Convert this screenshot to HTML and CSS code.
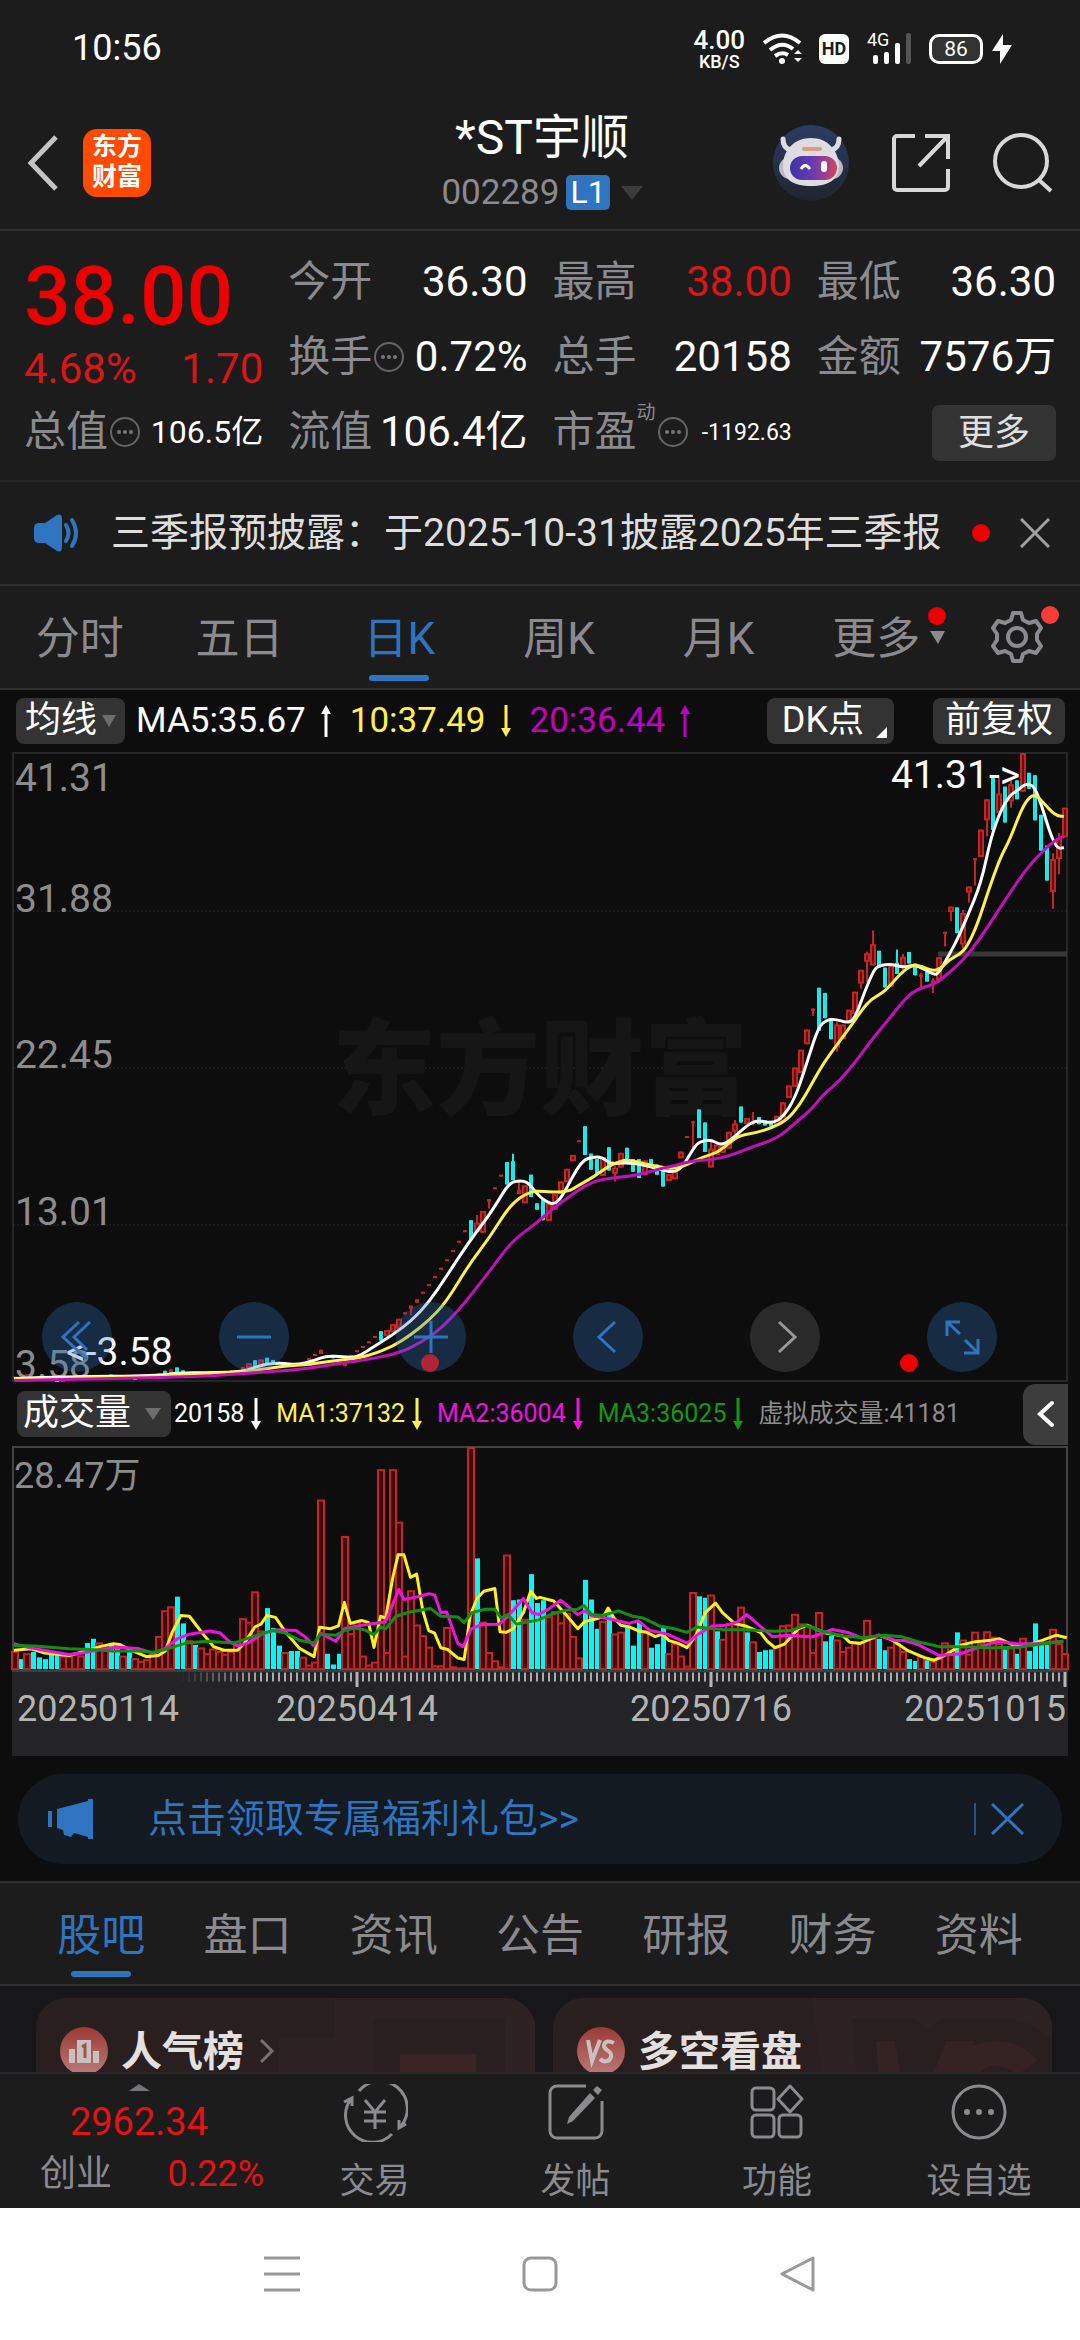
FILE: index.html
```html
<!DOCTYPE html>
<html lang="zh-CN">
<head>
<meta charset="utf-8">
<meta name="viewport" content="width=device-width, initial-scale=1">
<title>*ST宇顺 002289</title>
<link rel="stylesheet" href="styles.css">
</head>
<body>
<div class="status">
  <span class="clock">10:56</span>
  <span class="net-speed"><b>4.00</b><span>KB/S</span></span>
  <svg class="wifi" width="40" height="32" viewBox="0 0 40 32" fill="none" stroke="#fff" stroke-width="4">
    <path d="M1 10Q19-5 37 10M7 17Q19 7 30 16M12 23Q19 18 25 22"/>
    <circle cx="19" cy="28" r="3" fill="#fff" stroke="none"/>
    <path d="M31 21l4-4 4 4zM31 25l4 4 4-4z" fill="#fff" stroke="none"/>
  </svg>
  <span class="hd">HD</span>
  <span class="signal"><small>4G</small>
    <svg width="38" height="32" viewBox="0 0 38 32" fill="#fff"><rect y="22" width="5" height="9" rx="2"/><rect x="11" y="19" width="5" height="12" rx="2"/><rect x="22" y="10" width="5" height="21" rx="2"/><rect x="33" width="5" height="31" rx="2" fill="#555"/></svg>
  </span>
  <span class="battery">86</span>
  <svg class="bolt" width="20" height="30" viewBox="0 0 20 30" fill="#fff"><path d="M11 0L0 17h8v13L20 11h-9z"/></svg>
</div>

<header class="header">
  <button class="plain" aria-label="返回"><svg width="32" height="56" viewBox="0 0 32 56" fill="none" stroke="#c4c4c4" stroke-width="5"><path d="M29 2L4 28l25 26"/></svg></button>
  <a class="logo" href="#">东方<br>财富</a>
  <div class="title">
    <h1>*ST宇顺</h1>
    <p><span>002289</span><b>L1</b><svg width="22" height="14" viewBox="0 0 22 14"><path d="M0 0h22L11 14z" fill="#3c3c3c"/></svg></p>
  </div>
  <div class="header-tools">
    <button class="plain" aria-label="智能助手">
      <svg width="76" height="76" viewBox="0 0 76 76">
        <defs>
          <linearGradient id="sky" x1="0" y1="0" x2="0" y2="1"><stop stop-color="#2c3d63"/><stop offset="1" stop-color="#20242e"/></linearGradient>
          <linearGradient id="visor" x1="0" y1="0" x2="1" y2="0"><stop stop-color="#3a35a8"/><stop offset=".5" stop-color="#6c3bb0"/><stop offset="1" stop-color="#d4455f"/></linearGradient>
        </defs>
        <circle cx="38" cy="38" r="38" fill="url(#sky)"/>
        <path d="M10 14c0 7 3 10 8 11M66 14c0 7-3 10-8 11" stroke="#dedde2" stroke-width="5" stroke-linecap="round" fill="none"/>
        <rect x="6" y="32" width="64" height="22" rx="11" fill="#b9b8c4"/>
        <path d="M38 13c16 0 26 11 28 26 1 15-10 22-28 22S9 54 10 39c1-15 12-26 28-26z" fill="#dedce2"/>
        <rect x="29" y="22" width="20" height="4" rx="2" fill="#d9a080"/>
        <rect x="17" y="31" width="47" height="24" rx="12" fill="url(#visor)"/>
        <path d="M28 44q4-7 9 0" fill="none" stroke="#fff" stroke-width="3"/><rect x="48" y="36" width="6" height="11" rx="3" fill="#fff"/>
      </svg>
    </button>
    <button class="plain" aria-label="分享"><svg width="60" height="60" viewBox="0 0 60 60" fill="none" stroke="#d8d8d8" stroke-width="4"><path d="M24 3H6a3 3 0 0 0-3 3v48a3 3 0 0 0 3 3h48a3 3 0 0 0 3-3V36M34 3h23v23M57 3L28 33"/></svg></button>
    <button class="plain" aria-label="搜索"><svg width="60" height="60" viewBox="0 0 60 60" fill="none" stroke="#d8d8d8" stroke-width="4"><circle cx="28" cy="28" r="26"/><path d="M46 47l12 11"/></svg></button>
  </div>
</header>

<section class="quote">
  <div class="price"><strong>38.00</strong><p><span>4.68%</span><span>1.70</span></p></div>
  <dl><dt>今开</dt><dd>36.30</dd></dl>
  <dl><dt>最高</dt><dd class="up">38.00</dd></dl>
  <dl><dt>最低</dt><dd>36.30</dd></dl>
  <dl><dt>换手<svg class="more-dot" viewBox="0 0 30 30"><use href="#dots"/></svg></dt><dd>0.72%</dd></dl>
  <dl><dt>总手</dt><dd>20158</dd></dl>
  <dl><dt>金额</dt><dd>7576万</dd></dl>
  <dl><dt>总值<svg class="more-dot" viewBox="0 0 30 30"><use href="#dots"/></svg></dt><dd class="mid">106.5亿</dd></dl>
  <dl><dt>流值</dt><dd>106.4亿</dd></dl>
  <dl><dt>市盈<sup>动</sup><svg class="more-dot" viewBox="0 0 30 30"><use href="#dots"/></svg></dt><dd class="small">-1192.63</dd></dl>
  <button class="more">更多</button>
</section>
<svg width="0" height="0" class="defs"><symbol id="dots" viewBox="0 0 30 30"><circle cx="15" cy="15" r="14" fill="none" stroke="#66666a" stroke-width="2"/><g fill="#77777b"><circle cx="9" cy="15" r="2"/><circle cx="15" cy="15" r="2"/><circle cx="21" cy="15" r="2"/></g></symbol></svg>

<section class="notice">
  <svg width="46" height="38" viewBox="0 0 46 38"><path d="M0 14q0-5 5-5h6L23 1q5-2 5 4v28q0 6-5 4L11 29H5q-5 0-5-5z" fill="#2f74c0"/><path d="M32 11q5 8 0 16M38 6q8 13 0 26" fill="none" stroke="#2f74c0" stroke-width="4" stroke-linecap="round"/></svg>
  <a href="#">三季报预披露：于2025-10-31披露2025年三季报</a>
  <i class="dot"></i>
  <button class="plain" aria-label="关闭"><svg width="30" height="30" viewBox="0 0 30 30" stroke="#a0a0a0" stroke-width="3"><path d="M1 1l28 28M29 1L1 29"/></svg></button>
</section>

<nav class="periods">
  <button>分时</button><button>五日</button><button class="on">日K</button><button>周K</button><button>月K</button>
  <button>更多<span class="drop"><i class="dot"></i><svg width="15" height="13" viewBox="0 0 15 13"><path d="M0 0h15L8 13z" fill="#8a8a8f"/></svg></span></button>
  <button class="gear" aria-label="设置"><svg width="52" height="52" viewBox="0 0 52 52" fill="none" stroke="#8a8a8f" stroke-width="4" stroke-linejoin="round"><path d="M22 2h8l2 7 6 3 7-2 5 7-4 6v6l4 6-5 7-7-2-6 3-2 7h-8l-2-7-6-3-7 2-5-7 4-6v-6l-4-6 5-7 7 2 6-3z"/><circle cx="26" cy="26" r="9"/></svg><i class="dot"></i></button>
</nav>

<main class="chart">
  <div class="bar">
    <button class="chip">均线<svg width="14" height="12" viewBox="0 0 14 12"><path d="M0 0h14L7 12z" fill="#6c6c6c"/></svg></button>
    <span class="ma w">MA5:35.67<svg viewBox="0 0 12 32"><use href="#up"/></svg></span>
    <span class="ma y">10:37.49<svg viewBox="0 0 12 32"><use href="#down"/></svg></span>
    <span class="ma m">20:36.44<svg viewBox="0 0 12 32"><use href="#up"/></svg></span>
    <button class="chip dk">DK点<svg width="11" height="11" viewBox="0 0 11 11"><path d="M11 0v11H0z" fill="#fff"/></svg></button>
    <button class="chip adjust">前复权</button>
  </div>
  <svg width="0" height="0" class="defs">
    <symbol id="up" viewBox="0 0 12 32"><path d="M6 4v28" stroke="currentColor" stroke-width="3"/><path d="M6 0l5 9H1z" fill="currentColor"/></symbol>
    <symbol id="down" viewBox="0 0 12 32"><path d="M6 0v28" stroke="currentColor" stroke-width="3"/><path d="M6 32l5-9H1z" fill="currentColor"/></symbol>
  </svg>
  <div class="kline">
    <svg id="price" viewBox="0 0 1080 630">
      <rect x="13" y="1" width="1054" height="628" fill="none" stroke="#262626" stroke-width="2"/>
      <path d="M13 159H1067M13 316H1067M13 473H1067" stroke="#2c2c2c" stroke-dasharray="2 2"/>
      <text class="watermark" x="540" y="355" text-anchor="middle">东方财富</text>
      <path d="M938 202H1067" stroke="#383838" stroke-width="5"/>
      <g class="axis"><text x="15" y="39">41.31</text><text x="15" y="160">31.88</text><text x="15" y="316">22.45</text><text x="15" y="473">13.01</text><text x="15" y="626">3.58</text></g>
      <g id="candles"></g>
      <g class="mark"><text x="66" y="613">&lt;-3.58</text><text x="891" y="36">41.31-&gt;</text></g>
    </svg>
    <div class="controls">
      <button aria-label="最左"><svg viewBox="0 0 70 70"><path d="M37 20L21 35l24 22M48 20L32 35l13 13"/></svg></button>
      <button aria-label="缩小"><svg viewBox="0 0 70 70"><path d="M18 35h34"/></svg></button>
      <button aria-label="放大"><svg viewBox="0 0 70 70"><circle cx="34" cy="61" r="9" class="plus-dot"/><path d="M18 35h34M35 19v32"/></svg></button>
      <button aria-label="左移"><svg viewBox="0 0 70 70"><path d="M42 20L26 35l16 15"/></svg></button>
      <button class="off" aria-label="右移"><svg viewBox="0 0 70 70"><path d="M29 20l16 15-16 15"/></svg></button>
      <button aria-label="全屏"><i class="dot"></i><svg viewBox="0 0 70 70"><path d="M33 20H20v14M20 20l13 12M38 38l13 13M51 37v14H37"/></svg></button>
    </div>
  </div>
  <div class="bar vol-bar">
    <button class="chip">成交量<svg width="16" height="12" viewBox="0 0 16 12"><path d="M0 0h16L8 12z" fill="#6c6c6c"/></svg></button>
    <span class="ma w">20158<svg viewBox="0 0 12 32"><use href="#down"/></svg></span>
    <span class="ma y">MA1:37132<svg viewBox="0 0 12 32"><use href="#down"/></svg></span>
    <span class="ma p">MA2:36004<svg viewBox="0 0 12 32"><use href="#down"/></svg></span>
    <span class="ma g">MA3:36025<svg viewBox="0 0 12 32"><use href="#down"/></svg></span>
    <span class="ma n">虚拟成交量:41181</span>
    <button class="fold" aria-label="展开"><svg width="18" height="28" viewBox="0 0 18 28" fill="none" stroke="#fff" stroke-width="4" stroke-linecap="round"><path d="M15 3L3 14l12 11"/></svg></button>
  </div>
  <svg id="volume" viewBox="0 0 1080 310">
    <defs><linearGradient id="fade"><stop stop-color="#242426"/><stop offset="1" stop-color="#242426" stop-opacity="0"/></linearGradient></defs>
    <path d="M13 225V1H1067V225" fill="none" stroke="#444" stroke-width="2"/>
    <text class="axis" x="14" y="42">28.47万</text>
    <g id="bars"></g>
    <rect x="12" y="226" width="1056" height="84" fill="#242426"/>
    <path d="M12 225H1068" stroke="#3c3c3c" stroke-width="2"/>
    <path d="M182 231H1067" stroke="#aaa" stroke-width="9" stroke-dasharray="2 4"/>
    <rect x="180" y="226" width="80" height="12" fill="url(#fade)"/>
    <path d="M357 226v15M711 226v15M1065 226v15" stroke="#b4b4b4" stroke-width="3"/>
    <g class="dates"><text x="17" y="275">20250114</text><text x="357" y="275" text-anchor="middle">20250414</text><text x="711" y="275" text-anchor="middle">20250716</text><text x="1066" y="275" text-anchor="end">20251015</text></g>
  </svg>
  <aside class="promo">
    <svg width="46" height="40" viewBox="0 0 46 40" fill="#2f74c0"><path d="M0 12h4v16H0zM9 10L40 2V0h5v40h-5v-2l-14-4-3 4-7-2-1-5-6-2z"/></svg>
    <a href="#">点击领取专属福利礼包&gt;&gt;</a>
    <button class="plain" aria-label="关闭"><svg width="33" height="32" viewBox="0 0 33 32" stroke="#2f74c0" stroke-width="3"><path d="M1 1l31 30M32 1L1 31"/></svg></button>
  </aside>
</main>

<nav class="sections">
  <button class="on">股吧</button><button>盘口</button><button>资讯</button><button>公告</button><button>研报</button><button>财务</button><button>资料</button>
</nav>
<section class="feed">
  <a class="card" href="#">
    <svg class="card-art" viewBox="0 0 260 90" aria-hidden="true"><path d="M60 0h200v90h-30V20H98v70H4V40h56z" fill="#2d2221"/><path d="M125 56h76v34h-76z" fill="#382423"/></svg>
    <svg width="48" height="48" viewBox="0 0 48 48"><defs><linearGradient id="badge" x1="0" y1="0" x2="0" y2="1"><stop stop-color="#9c3a35"/><stop offset="1" stop-color="#b97b78"/></linearGradient></defs><circle cx="24" cy="24" r="24" fill="url(#badge)"/><path d="M9 22h6v14H9zM17 13h14v23H17zM33 24h6v12h-6z" fill="#c9c0c0"/><path d="M22 20l3-2v13" fill="none" stroke="#a5504c" stroke-width="3"/></svg>
    <span>人气榜</span>
    <svg width="15" height="24" viewBox="0 0 15 24" fill="none" stroke="#77706f" stroke-width="3"><path d="M1 1l11 11L1 23"/></svg>
  </a>
  <a class="card" href="#">
    <svg class="card-art" viewBox="0 0 260 90" aria-hidden="true"><path d="M20 0h240v90H32z" fill="#2d2221"/><path d="M60 20h60l16 10 14-10h58q34 2 52 22v48H66z" fill="#291f1e"/><path d="M84 43h19l8 47H87zM136 90l18-47h28l-2 5q40-14 66 14l-20 15q-28-20-44 5v8z" fill="#352222"/></svg>
    <svg width="48" height="48" viewBox="0 0 48 48"><circle cx="24" cy="24" r="24" fill="url(#badge)"/><path d="M11 13l4 21 8-21M37 16q-8-4-10 2c-1 6 9 5 7 12-2 6-8 5-11 2" fill="none" stroke="#c9c0c0" stroke-width="4"/></svg>
    <span>多空看盘</span>
  </a>
</section>

<footer class="dock">
  <a class="index" href="#">
    <svg width="21" height="7" viewBox="0 0 21 7"><path d="M10 0l11 7H0z" fill="#77777b"/></svg>
    <b>2962.34</b>
    <span>创业<em>0.22%</em></span>
  </a>
  <a href="#"><svg width="66" height="58" viewBox="0 0 66 58" fill="none" stroke="#8a8a8f" stroke-width="3"><path d="M17 7A27 27 0 0 1 59 42M50 50A27 27 0 0 1 9 15M2 18l8-4v8M64 40l-7 4v-8M23 16l10 12 10-12M22 28h22M22 37h22M33 28v17"/></svg>交易</a>
  <a href="#"><svg width="56" height="56" viewBox="0 0 56 56" fill="none" stroke="#8a8a8f" stroke-width="3"><path d="M38 2H9a7 7 0 0 0-7 7v38a7 7 0 0 0 7 7h38a7 7 0 0 0 7-7V17"/><path d="M42 9l5 5L25 37l-6 3 2-7zM45 6l4-4 5 4-4 5z" fill="#8a8a8f" stroke="none"/></svg>发帖</a>
  <a href="#"><svg width="54" height="56" viewBox="0 0 54 56" fill="none" stroke="#8a8a8f" stroke-width="3"><rect x="2" y="4" width="22" height="22" rx="4"/><rect x="2" y="31" width="22" height="22" rx="4"/><rect x="29" y="31" width="22" height="22" rx="4"/><path d="M40 2l12 13-12 13-12-13z" stroke-linejoin="round"/></svg>功能</a>
  <a href="#"><svg width="56" height="56" viewBox="0 0 56 56" fill="none" stroke="#8a8a8f" stroke-width="3"><circle cx="28" cy="28" r="26"/><g fill="#8a8a8f" stroke="none"><circle cx="16" cy="28" r="3"/><circle cx="28" cy="28" r="3"/><circle cx="40" cy="28" r="3"/></g></svg>设自选</a>
</footer>
<div class="system">
  <button class="plain" aria-label="最近任务"><svg width="36" height="36" viewBox="0 0 36 36" stroke="#999" stroke-width="3"><path d="M0 2h36M0 18h36M0 34h36"/></svg></button>
  <button class="plain" aria-label="主页"><svg width="36" height="36" viewBox="0 0 36 36" fill="none" stroke="#999" stroke-width="3"><rect x="2" y="2" width="32" height="32" rx="7"/></svg></button>
  <button class="plain" aria-label="后退"><svg width="36" height="36" viewBox="0 0 36 36" fill="none" stroke="#999" stroke-width="3" stroke-linejoin="round"><path d="M33 2v32L2 18z"/></svg></button>
</div>
<script src="chart.js"></script>
</body>
</html>
```
FILE: styles.css
```css
* { box-sizing: border-box; }
body { margin: 0; background: #1c1c1c; color: #fff; font-family: Roboto, "Noto Sans CJK SC", sans-serif; font-size: 42px; line-height: 1.2; }
button { border: 0; padding: 0; background: none; color: inherit; font: inherit; white-space: nowrap; }
a { color: inherit; text-decoration: none; white-space: nowrap; }
h1, p, dl, dd { margin: 0; }
svg { display: block; flex: none; }
.defs { position: absolute; }
.dot { display: block; width: 18px; height: 18px; border-radius: 50%; background: #ec0000; flex: none; }
.up { color: #d81616; }

.status { display: flex; align-items: center; height: 96px; padding: 2px 68px 0 72px; font-size: 36px; }
.clock { flex: 1; }
.net-speed { display: flex; flex-direction: column; align-items: center; font-size: 18px; line-height: 18px; font-weight: 500; }
.net-speed b { font-size: 26px; font-weight: 500; line-height: 26px; }
.wifi { margin-left: 18px; }
.hd { margin-left: 16px; width: 30px; height: 30px; border-radius: 6px; background: #fff; color: #1c1c1c; font-size: 18px; font-weight: 700; line-height: 30px; text-align: center; }
.signal { position: relative; margin-left: 24px; }
.signal small { position: absolute; left: -6px; top: -2px; font-size: 18px; line-height: 18px; }
.battery { margin-left: 18px; width: 54px; height: 30px; border: 3px solid #fff; border-radius: 10px; background: #333; font-size: 21px; line-height: 24px; text-align: center; }
.bolt { margin-left: 9px; }

.header { display: flex; align-items: center; height: 135px; padding: 0 27px; border-bottom: 2px solid #303030; }
.logo { width: 68px; height: 68px; margin-left: 24px; border-radius: 14px; background: #ff4a00; font-size: 25px; font-weight: 700; line-height: 30px; text-align: center; padding: 3px 0; }
.title { flex: 1; display: flex; flex-direction: column; align-items: center; padding: 0 0 0 160px; }
.title h1 { font-size: 48px; font-weight: 400; line-height: 60px; }
.title p { display: flex; align-items: center; font-size: 35px; line-height: 50px; color: #8a8a8f; }
.title b { margin: 0 11px 0 7px; padding: 0 4px; height: 35px; border-radius: 5px; background: #2f74c0; color: #fff; font-size: 32px; font-weight: 400; line-height: 35px; }
.header-tools { display: flex; align-items: center; gap: 42px; }

.quote { display: grid; grid-template-columns: repeat(4, minmax(0, 1fr)); grid-template-rows: repeat(3, 75px); column-gap: 25px; padding: 14px 24px 10px; border-bottom: 2px solid #262626; }
.price { grid-row: span 2; color: #ec0000; }
.price strong { display: block; padding-top: 3px; font-size: 82px; font-weight: 500; line-height: 96px; }
.price p { display: flex; justify-content: space-between; line-height: 50px; color: #d81616; }
.quote dl { display: flex; align-items: center; justify-content: space-between; white-space: nowrap; }
.quote dt { position: relative; display: flex; align-items: center; color: #8a8a8f; }
.quote sup { align-self: flex-start; font-size: 19px; line-height: 12px; }
.more-dot { width: 30px; height: 30px; margin-left: 2px; }
.mid { font-size: 32px; }
.small { font-size: 23px; }
.more { justify-self: end; align-self: center; width: 124px; height: 56px; border-radius: 7px; background: #333; color: #e0e0e0; font-size: 36px; line-height: 54px; }

.notice { display: flex; align-items: center; height: 104px; padding: 0 30px 0 34px; border-bottom: 2px solid #303030; font-size: 39px; color: #dedede; }
.notice a { flex: 1; padding-left: 31px; }
.notice .dot { margin-right: 30px; }

.periods { display: flex; height: 104px; padding-right: 4px; border-bottom: 2px solid #303030; font-size: 44px; color: #8a8a8f; }
.periods button { position: relative; flex: 160 1 0; display: flex; align-items: center; justify-content: center; padding-top: 5px; }
.periods .gear { flex: 118 1 0; padding-top: 0; }
.on { position: relative; color: #2f74c0; }
.on::after { content: ""; position: absolute; left: calc(50% - 30px); bottom: 7px; width: 60px; height: 6px; border-radius: 3px; background: #2f74c0; }
.drop { display: flex; flex-direction: column; align-items: center; gap: 6px; margin: 0 -22px 29px 8px; }
.gear .dot { position: absolute; right: 17px; top: 20px; background: #f63c36; }

.chart { background: #0d0d0d; padding-bottom: 17px; }
.bar { display: flex; align-items: center; height: 62px; padding: 0 15px 0 16px; font-size: 35px; white-space: nowrap; }
.chip { display: flex; align-items: center; gap: 5px; height: 46px; padding: 0 9px; border-radius: 8px; background: #333; font-size: 36px; }
.ma { display: flex; align-items: center; }
.ma svg { width: 12px; height: 32px; margin: 0 18px 0 14px; }
.bar > .chip:first-child { margin-right: 11px; }
.w { color: #fff; } .y { color: #fff04f; } .m { color: #c000c0; } .p { color: #f010e0; } .g { color: #109810; } .n { color: #8c8c8c; }
.chip.dk { margin-left: auto; margin-right: 39px; padding: 0 7px 0 15px; gap: 12px; }
.chip.adjust { padding: 0 12px; }
.dk svg { align-self: flex-end; margin-bottom: 6px; }
.kline { position: relative; }
#price, #volume { width: 100%; height: auto; }
.axis { fill: #8c8c8c; font-size: 39px; }
text.axis { font-size: 36px; }
.mark { fill: #fff; font-size: 39px; }
.watermark { fill: #151515; font-size: 104px; font-weight: 900; }
.dates { fill: #b4b4b4; font-size: 36px; }
.controls { position: absolute; left: 4%; right: 8%; bottom: 10px; margin: 0 -3px 0 -1px; display: flex; justify-content: space-between; }
.controls button { position: relative; width: 70px; height: 70px; border-radius: 50%; background: rgba(47, 116, 192, .3); }
.controls svg { fill: none; stroke: #2f74c0; stroke-width: 3; }
.controls .off { background: rgba(160, 160, 160, .2); }
.controls .off svg { stroke: #999; }
.controls .dot { position: absolute; left: -27px; bottom: 0; }
.controls .plus-dot { fill: #b02438; stroke: none; }
.vol-bar { height: 64px; padding: 0 12px 0 17px; font-size: 25px; }
.vol-bar .chip { padding: 0 10px 0 6px; gap: 14px; }
.bar.vol-bar > .chip:first-child { margin-right: 3px; }
.vol-bar .ma svg { margin: 0 14px 0 6px; }
.fold { display: flex; align-items: center; justify-content: center; width: 45px; height: 61px; margin-left: auto; border-radius: 12px 0 0 12px; background: #3d3d3d; }

.promo { display: flex; align-items: center; height: 90px; margin: 18px 18px 0; padding: 0 38px 0 30px; border-radius: 45px; background: #131a22; color: #2f74c0; font-size: 39px; }
.promo a { flex: 1; padding-left: 54px; }
.promo button { padding-left: 15px; border-left: 2px solid #245488; }

.sections { display: flex; height: 105px; padding: 0 28px; border-top: 2px solid #303030; border-bottom: 2px solid #303030; font-size: 44px; color: #8a8a8f; }
.sections button { flex: 1; padding-top: 6px; }
.feed { display: grid; grid-template-columns: 1fr 1fr; gap: 18px; height: 86px; padding: 12px 28px 0 36px; overflow: hidden; background: #17171a; }
.card { position: relative; display: flex; align-items: center; height: 180px; padding: 0 24px 74px; border-radius: 30px; background: #281f1e; color: #e4e0e0; font-size: 41px; font-weight: 700; overflow: hidden; }
.card span { position: relative; padding: 4px 16px 0 13px; }
.card svg { position: relative; }
.card .card-art { position: absolute; right: 0; top: 0; width: 260px; height: 90px; }

.dock { display: grid; grid-template-columns: 274fr 201fr 201fr 202fr 202fr; height: 136px; border-top: 2px solid #282828; color: #8a8a8f; font-size: 35px; }
.dock a { display: flex; flex-direction: column; align-items: center; justify-content: space-between; padding: 10px 0 5px; }
.dock .index { padding: 10px 10px 13px 40px; font-size: 36px; }
.index b { padding-right: 26px; color: #e01414; font-size: 38px; font-weight: 400; line-height: 54px; }
.index svg { margin-right: 26px; }
.index span { align-self: stretch; display: flex; justify-content: space-between; line-height: 42px; }
.index em { color: #e01414; font-style: normal; }
.system { display: flex; align-items: center; justify-content: center; gap: 222px; height: 132px; background: #fff; }
```
FILE: chart.js
```js
const NS = 'http://www.w3.org/2000/svg';
const RED = '#c82222', CYAN = '#18eaea';
const px = i => 15 + i * 6;
function add(parent, tag, attrs) {
  const el = document.createElementNS(NS, tag);
  for (const k in attrs) el.setAttribute(k, attrs[k]);
  parent.appendChild(el);
}
function curve(points) {
  let d = `M${points[0]}`;
  for (let i = 1; i < points.length - 1; i++) {
    const [x, y] = points[i], [nx, ny] = points[i + 1];
    d += `Q${x} ${y} ${(x + nx) / 2} ${(y + ny) / 2}`;
  }
  return d + `L${points[points.length - 1]}`;
}
const pairs = s => s.trim().split(/\s+/).map(p => p.split(',').map(Number));

// Price panel. Each candle: index, colour, high, low, optional body top and bottom.
const priceY = v => (v - 30) / 2.376 + 1;
const candles = `
0 r 1512 1516;2 r 1506 1511;5 r 1512 1516;7 c 1522 1527;8 r 1522 1526;11 r 1513 1516;14 r 1508 1512;16 c 1507 1511;18 r 1509 1512;20 c 1515 1518;22 r 1509 1513;24 r 1504 1511;25 c 1498 1508;26 r 1494 1504;27 c 1490 1502;28 c 1497 1502;32 r 1502 1505;34 r 1499 1503;36 r 1498 1502;38 r 1489 1498;39 r 1480 1492;40 c 1473 1490;41 r 1471 1484;42 c 1467 1482;43 c 1472 1482;46 c 1482 1488;48 r 1477 1481;49 r 1468 1472;50 r 1458 1462;51 r 1448 1458;53 c 1463 1468;54 c 1478 1482;55 r 1480 1487;56 r 1460 1468;57 r 1449 1453;58 r 1439 1443;59 r 1428 1432;60 r 1415 1419;61 c 1404 1426;62 r 1401 1416;63 r 1387 1406;64 r 1374 1398;65 r 1359 1363;66 r 1343 1366 1343 1351;67 r 1328 1336;68 r 1310 1314;69 r 1292 1296;70 r 1273 1277;71 r 1253 1257;72 r 1233 1237;73 r 1211 1215;74 r 1189 1193;75 r 1164 1168;76 c 1140 1187;77 r 1128 1168 1146 1168;78 r 1118 1170;79 r 1090 1112 1090 1096;80 r 1062 1066;81 r 1032 1036;82 c 1002 1055;83 c 982 1045 1000 1045;84 r 1050 1078 1068 1078;85 r 1057 1100;86 c 1032 1085;87 c 1100 1115;
88 c 1090 1140;89 r 1100 1142;90 r 1078 1115;91 r 1048 1078;92 r 1018 1050;93 r 985 1000;94 r 950 954;95 c 917 985;96 c 982 1020;97 c 995 1030;98 r 990 1035;99 c 967 1022;100 r 1010 1048 1015 1030;101 r 980 1015;102 c 968 1003;103 c 995 1025;104 c 995 1040;105 r 998 1033;106 c 995 1015;107 c 1008 1032;108 c 1018 1060;109 r 1030 1047;110 r 1022 1043;111 r 977 993;112 r 940 944;113 r 905 968 905 909;114 c 877 945;115 c 908 978;116 r 950 1015 970 1015;117 r 960 985;118 r 960 980;119 r 930 970;120 r 902 940 910 930;121 c 870 908;122 r 897 912;123 r 883 915 905 912;124 c 895 912;125 c 903 915;126 c 905 917;127 r 892 915;128 r 860 907;129 r 820 850;130 r 777 823;131 r 735 790;132 r 687 722;133 r 637 655 637 643;134 c 588 690;135 c 600 660;136 c 660 710;137 r 670 740 675 730;138 r 675 710;139 r 640 672;140 r 597 650;141 r 545 590 545 578;142 r 502 575 506 526;143 r 452 535 484 535;144 c 500 540;145 c 540 587;146 r 535 585;147 c 497 555 528 555;148 r 507 555 514 540;149 c 503 530;150 c 530 558;151 r 552 588 556 562;152 c 550 573;153 r 565 600 570 578;154 r 515 570;155 r 455 490 455 459;156 r 395 430 395 408;157 c 397 458;158 r 403 495 410 485;159 r 347 385 347 362;160 r 280 345 280 284;161 r 212 277;162 r 140 228 140 190;163 c 83 213;164 r 88 172 126 172;165 c 110 195;166 r 95 160 104 145;167 c 95 140;168 r 30 122;169 c 77 115;170 c 83 190;171 c 177 262;172 c 250 333;173 r 268 400 282 360;174 r 220 318 232 282;175 r 160 230`;
const g = document.getElementById('candles');
candles.trim().split(';').forEach(row => {
  const [i, c, hi, lo, top = hi, bot = lo] = row.trim().split(' ');
  const x = px(+i), y1 = priceY(+top), y2 = priceY(+bot), h = Math.max(2, y2 - y1);
  const color = c === 'r' ? RED : CYAN;
  add(g, 'path', { d: `M${x} ${priceY(+hi)}V${priceY(+lo)}`, stroke: color, 'stroke-width': 2 });
  if (c === 'r' && h > 5) {
    add(g, 'rect', { x: x - 2, y: y1 + 1, width: 4, height: h - 2, fill: '#5a1212', stroke: RED, 'stroke-width': 2 });
  } else {
    add(g, 'rect', { x: x - 2, y: y1, width: 4, height: h, fill: color });
  }
});
const averages = {
  '#fff': '14,1516 71,1512 157,1510 179,1502 214,1503 243,1500 264,1482 282,1479 296,1484 314,1474 327,1462 343,1465 357,1466 371,1445 393,1412 411,1380 429,1335 446,1275 470,1188 487,1135 498,1095 507,1060 514,1047 527,1047 536,1075 545,1095 554,1103 562,1085 574,1030 583,998 592,990 602,990 611,1007 626,1003 643,1008 660,1020 674,1027 683,1012 692,975 698,955 710,948 722,963 733,945 747,915 757,902 772,910 783,895 795,850 805,780 817,690 824,667 834,661 848,672 855,660 865,595 874,545 879,535 891,531 903,540 914,533 924,543 934,557 939,553 950,505 957,475 967,420 981,340 991,230 1001,165 1010,130 1017,120 1026,102 1034,108 1041,150 1050,220 1057,257 1064,255',
  '#fff04f': '14,1518 150,1512 214,1504 243,1500 270,1492 290,1485 310,1483 330,1475 357,1468 371,1460 393,1440 411,1412 429,1378 446,1335 470,1242 490,1180 507,1115 520,1085 532,1072 540,1071 567,1075 580,1055 594,1037 608,1012 622,998 630,997 645,1006 663,1015 676,1018 690,1005 703,990 717,980 730,955 740,938 757,932 772,920 787,902 800,865 812,815 824,765 838,720 852,675 862,640 871,615 885,597 900,555 912,533 922,537 932,548 940,543 950,520 960,508 967,490 977,440 988,360 1000,280 1010,235 1022,160 1030,133 1036,130 1044,150 1055,178 1064,181',
  '#c010b8': '14,1521 100,1517 200,1512 250,1503 300,1495 340,1480 371,1470 400,1455 420,1432 440,1400 460,1350 475,1305 490,1260 507,1205 520,1175 535,1150 554,1110 567,1088 585,1057 602,1042 633,1035 654,1022 678,1008 692,999 712,996 729,988 753,965 778,945 795,910 812,875 822,845 840,808 857,760 872,710 888,665 903,620 915,593 936,578 950,550 964,520 981,468 998,405 1012,355 1026,307 1036,280 1053,240 1064,228'
};
for (const color in averages) {
  const pts = pairs(averages[color]).map(([x, y]) => [x, priceY(y)]);
  add(g, 'path', { d: curve(pts), fill: 'none', stroke: color, 'stroke-width': 3 });
}

// Volume panel. One level per trading day, "c" marks a falling day.
const volX = u => u / 2.904, volY = v => (v - 691) / 2.8 + 1;
const levels = `1262 c1285 1268 c1265 c1280 c1285 c1270 c1270 1275 1275 1270 1275 c1240 c1228 1238 1255 c1245 c1250 1275 c1265 1282 1290 1285 1268 1220 1148 1137 c1110 c1185 1232 c1245 1252 1268 1255 1262 1270 1262 1235 1170 1180 1095 1205 c1142 c1198 c1247 1265 c1262 c1262 1278 1300 1292 838 c1270 c1300 c1270 940 1212 1180 1275 1300 1292 753 1265 753 900 1275 1092 1188 1218 1250 1302 1302 1195 1305 1308 1308 691 c1003 1180 1265 1288 1305 992 c1120 c1118 1172 c1047 c1128
c1120 1165 1150 1182 1155 1220 1280 c1063 c1118 c1200 1178 c1150 1213 1208 c1198 c1247 c1180 1205 c1253 c1243 c1195 1268 1240 1275 1303 1097 c1109 c1113 1104 c1207 1228 1185 1185 1138 c1210 1235 c1265 c1260 c1258 1250 1190 1188 1158 1185 1188 1265 1153 c1235 c1220 1230 1262 1250 1235 1235 1175 1225 c1228 c1260 1250 1240 1262 c1285 c1290 1275 c1288 1290 1282 1238 1245 c1210 1230 1270 1208 1240 1207 1222 1240 c1258 1252 c1270 1225 c1262 c1185 c1245 c1245 1200 1240 1268`;
const bars = document.getElementById('bars'), base = volY(1313);
levels.trim().split(/\s+/).forEach((s, i) => {
  const falling = s[0] === 'c', y = volY(+s.replace('c', ''));
  if (falling) add(bars, 'rect', { x: px(i) - 2, y, width: 5, height: base - y, fill: '#00f8f8' });
  else add(bars, 'rect', { x: px(i) - 3, y: y + 1, width: 6, height: Math.max(1, base - y - 1), fill: '#3a0e0e', stroke: RED, 'stroke-width': 2 });
});
const volumeLines = {
  '#ffee22': ['40,1260 90,1256 130,1268 200,1275 250,1262 290,1250 330,1242 350,1245 380,1260 425,1278 460,1275 480,1262 500,1210 525,1163 550,1165 590,1215 620,1250 650,1260 690,1260 710,1240 740,1195 758,1187 775,1163 800,1168 830,1210 870,1255 912,1278 928,1196 960,1200 983,1192 1000,1126 1017,1185 1050,1177 1070,1182 1086,1252 1105,1165 1120,1170 1140,1060 1156,993 1173,993 1192,1056 1210,1047 1228,1150 1245,1205 1262,1212 1280,1253 1300,1258 1330,1282 1348,1286 1365,1165 1385,1115 1405,1095 1437,1087 1452,1208 1470,1210 1490,1200 1520,1155 1541,1095 1558,1115',
    '0,1112 40,1122 75,1160 110,1200 130,1180 165,1172 185,1165 198,1142 215,1170 235,1190 260,1195 290,1207 310,1210 335,1222 355,1215 375,1233 400,1240 427,1253 455,1215 480,1155 510,1128 530,1155 565,1185 600,1193 640,1210 660,1235 683,1253 710,1243 750,1200 775,1190 800,1200 830,1212 880,1220 900,1238 930,1241 985,1218 1020,1230 1070,1262 1120,1282 1145,1288 1175,1275 1225,1245 1265,1236 1310,1232 1335,1228 1380,1248 1420,1245 1460,1232 1500,1218 1530,1225'],
  '#f010e0': ['40,1242 80,1252 140,1262 200,1272 240,1268 290,1258 340,1252 400,1255 445,1268 480,1255 515,1228 550,1215 610,1206 640,1212 665,1235 690,1248 720,1240 760,1215 800,1203 860,1205 885,1222 912,1248 930,1212 975,1235 1000,1200 1050,1190 1120,1180 1158,1090 1173,1118 1215,1110 1245,1102 1262,1105 1280,1155 1297,1153 1330,1242 1345,1250 1368,1200 1400,1188 1450,1187 1475,1165 1520,1115 1545,1155 1565,1160',
    '25,1145 60,1120 110,1160 130,1150 150,1163 200,1172 260,1185 285,1177 320,1205 370,1215 400,1228 427,1240 460,1215 500,1192 540,1190 575,1180 600,1160 630,1185 675,1222 720,1218 790,1223 850,1202 900,1212 940,1228 985,1218 1030,1232 1060,1233 1100,1245 1160,1275 1220,1270 1280,1250 1330,1235 1380,1242 1440,1242 1520,1235'],
  '#109010': ['40,1247 100,1248 200,1256 260,1258 330,1262 400,1262 445,1266 490,1255 540,1240 600,1235 680,1240 740,1220 790,1205 830,1212 870,1232 912,1240 930,1215 975,1218 1000,1205 1030,1198 1060,1203 1086,1217 1105,1195 1120,1200 1150,1165 1190,1153 1250,1143 1280,1165 1330,1167 1348,1183 1370,1155 1410,1145 1437,1145 1455,1170 1475,1160 1500,1187 1520,1183 1565,1175',
    '30,1160 75,1148 110,1145 128,1135 150,1160 180,1163 228,1150 270,1165 300,1170 350,1193 390,1200 427,1210 455,1195 530,1202 600,1203 680,1207 730,1205 770,1190 820,1207 880,1220 940,1225 1000,1218 1050,1222 1100,1237 1160,1250 1230,1250 1310,1253 1390,1252 1440,1245 1520,1235']
};
for (const color in volumeLines) {
  const [left, right] = volumeLines[color].map(pairs);
  const pts = left.concat(right.map(([x, y]) => [x + 1568, y])).map(([x, y]) => [volX(x), volY(y)]);
  add(bars, 'polyline', { points: pts.join(' '), fill: 'none', stroke: color, 'stroke-width': 3, 'stroke-linejoin': 'round' });
}
```
